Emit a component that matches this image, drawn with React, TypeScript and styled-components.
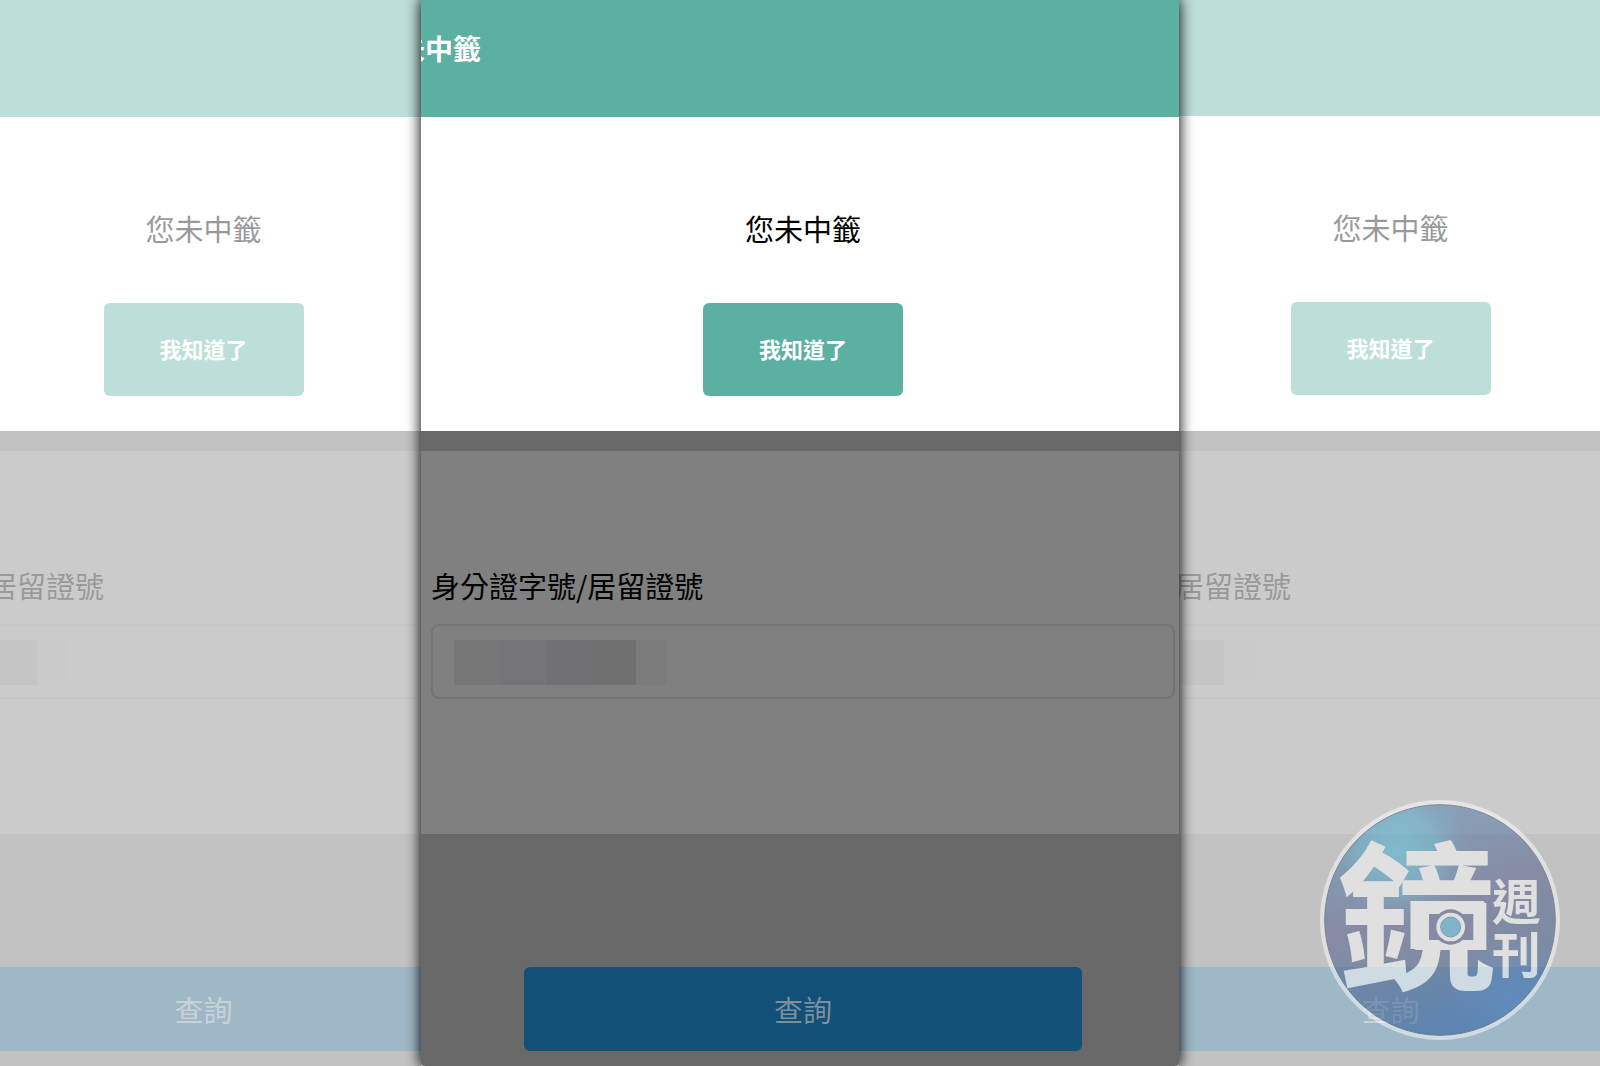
import React, { useId } from "react";
import styled, { createGlobalStyle, css } from "styled-components";

const GlobalStyle = createGlobalStyle`
  *, *::before, *::after { box-sizing: border-box; }
  body {
    margin: 0;
    background: #fff;
    font-family: "Noto Sans CJK TC", "Noto Sans", sans-serif;
  }
`;

type Side = "left" | "center" | "right";

const gutters: Record<Side, string> = {
  left: "0 14px 0 0",
  center: "0 4px 0 10px",
  right: "0 6px 0 8px",
};

const Stage = styled.main`
  position: relative;
  display: grid;
  grid-template-columns: 421fr 758fr 421fr;
  min-height: 100vh;
  overflow: hidden;
`;

const Panel = styled.section<{ $side: Side }>`
  display: flex;
  justify-content: center;
  min-width: 0;
  ${({ $side }) =>
    $side === "center"
      ? css`
          z-index: 1;
          border-radius: 0 0 4px 4px;
          overflow: hidden;
          box-shadow: 0 0 14px 1px rgba(0, 0, 0, 0.95);
        `
      : css`
          overflow: hidden;
          opacity: 0.4;
        `}
`;

const Page = styled.div<{ $side: Side }>`
  flex: none;
  display: flex;
  flex-direction: column;
  width: ${({ $side }) => ($side === "center" ? "100%" : "180%")};
  background: #696969;
`;

const Header = styled.header<{ $side: Side }>`
  height: ${({ $side }) => ($side === "right" ? 116 : 117)}px;
  padding-top: 27px;
  background: #5bb0a2;
`;

const Title = styled.h1`
  display: flex;
  justify-content: flex-end;
  width: 60px;
  margin: 0;
  overflow: hidden;
  color: #fff;
  font-size: 28px;
  font-weight: 700;
  line-height: 42px;
  white-space: nowrap;
`;

const Body = styled.div<{ $side: Side; $tone: string }>`
  display: flex;
  flex-direction: column;
  padding: ${({ $side }) => gutters[$side]};
  background: ${({ $tone }) => $tone};
`;

const Dialog = styled.div<{ $side: Side }>`
  display: flex;
  flex-direction: column;
  align-items: center;
  gap: 54px;
  padding: 90px 0 ${({ $side }) => ($side === "right" ? 36 : 35)}px;
`;

const Message = styled.p`
  margin: 0;
  color: #000;
  font-size: 29px;
  line-height: 42px;
`;

const Button = styled.button`
  border: 0;
  border-radius: 6px;
  font-family: inherit;
  cursor: pointer;
`;

const ConfirmButton = styled(Button)`
  width: 200px;
  height: 93px;
  padding: 0 0 4px;
  background: #5bb0a2;
  color: #fff;
  font-size: 22px;
  font-weight: 700;
`;

const Divider = styled.div`
  height: 20px;
`;

const Field = styled.div`
  display: flex;
  flex-direction: column;
  gap: 18px;
  padding: 113px 0 135px;
`;

const Label = styled.label`
  color: #000;
  font-size: 29px;
  line-height: 42px;
  white-space: nowrap;
`;

const IdInput = styled.input`
  width: 100%;
  height: 75px;
  padding: 0 22px;
  border: 2px solid #747474;
  border-radius: 8px;
  outline: none;
  font: inherit;
  background: linear-gradient(
      to right,
      #777777 0 45px,
      #747479 45px 92px,
      #717175 92px 136px,
      #707071 136px 182px,
      #7c7c7c 182px
    )
    21px 14px / 213px 45px no-repeat #808080;
`;

const Actions = styled.div`
  display: flex;
  justify-content: center;
  padding: 133px 0 14px;
`;

const SearchButton = styled(Button)`
  width: 75%;
  height: 84px;
  background: #125078;
  color: #7b8f9c;
  font-size: 29px;
`;

const Watermark = styled.svg`
  position: absolute;
  z-index: 2;
  right: 40px;
  bottom: 26px;
  width: 240px;
  height: 240px;
  opacity: 0.5;
  pointer-events: none;
`;

const LogoText = styled.text`
  fill: #fff;
  font-family: "Noto Sans CJK TC", sans-serif;
  font-weight: 700;
`;

function MagazineLogo() {
  return (
    <Watermark viewBox="60 60 720 720" role="img" aria-label="鏡週刊">
      <defs>
        <linearGradient id="base" x1="0.35" y1="0" x2="0.65" y2="1">
          <stop offset="0" stopColor="#4a7cad" />
          <stop offset="0.45" stopColor="#4b5588" />
          <stop offset="0.7" stopColor="#3a5586" />
          <stop offset="1" stopColor="#1552a0" />
        </linearGradient>
        <radialGradient id="glow" cx="0.32" cy="0.2" r="0.38">
          <stop offset="0" stopColor="#3fb6d8" />
          <stop offset="0.45" stopColor="#3fa6cc" stopOpacity="0.75" />
          <stop offset="1" stopColor="#4b5588" stopOpacity="0" />
        </radialGradient>
        <radialGradient id="deep" cx="0.8" cy="0.84" r="0.28">
          <stop offset="0" stopColor="#2462b8" stopOpacity="0.8" />
          <stop offset="1" stopColor="#2462b8" stopOpacity="0" />
        </radialGradient>
      </defs>
      <circle cx="420" cy="420" r="360" fill="#fff" />
      <circle cx="420" cy="420" r="346" fill="url(#base)" />
      <circle cx="420" cy="420" r="346" fill="url(#glow)" />
      <circle cx="420" cy="420" r="346" fill="url(#deep)" />
      <circle cx="420" cy="420" r="346" fill="none" stroke="#3d4a60" strokeWidth="3" />
      <LogoText x="112" y="592" fontSize="476">鏡</LogoText>
      <LogoText x="576" y="420" fontSize="146">週</LogoText>
      <LogoText x="576" y="580" fontSize="146">刊</LogoText>
      <rect x="345" y="368" width="214" height="142" fill="#fff" />
      <rect x="387" y="402" width="133" height="78" fill="#4b5588" />
      <circle cx="452" cy="441" r="53" fill="#4b5588" />
      <circle cx="452" cy="441" r="43" fill="#fff" />
      <circle cx="452" cy="441" r="30" fill="#3fa9cf" stroke="#4b6f96" strokeWidth="3" />
    </Watermark>
  );
}

function LotteryScreen({ side }: { side: Side }) {
  const fieldId = useId();
  return (
    <Panel $side={side}>
      <Page $side={side}>
        <Header $side={side}>{side === "center" && <Title>未中籤</Title>}</Header>
        <Body $side={side} $tone="#fff">
          <Dialog $side={side}>
            <Message>您未中籤</Message>
            <ConfirmButton type="button">我知道了</ConfirmButton>
          </Dialog>
        </Body>
        <Divider />
        <Body $side={side} $tone="#808080">
          <Field>
            <Label htmlFor={fieldId}>身分證字號/居留證號</Label>
            <IdInput id={fieldId} type="text" />
          </Field>
        </Body>
        <Body $side={side} $tone="#696969">
          <Actions>
            <SearchButton type="button">查詢</SearchButton>
          </Actions>
        </Body>
      </Page>
    </Panel>
  );
}

export default function App() {
  return (
    <>
      <GlobalStyle />
      <Stage>
        <LotteryScreen side="left" />
        <LotteryScreen side="center" />
        <LotteryScreen side="right" />
        <MagazineLogo />
      </Stage>
    </>
  );
}
